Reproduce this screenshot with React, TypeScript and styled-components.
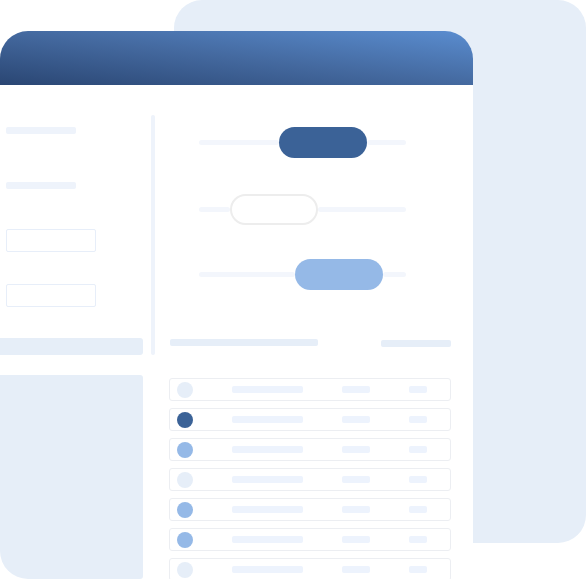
import React from 'react'
import styled, { createGlobalStyle } from 'styled-components'

const GlobalStyle = createGlobalStyle`
    html, body {
        margin: 0;
        padding: 0;
        overflow: hidden;
        background: #ffffff;
        font-family: 'Liberation Sans', Arial, sans-serif;
    }
`

const Stage = styled.div`
    position: relative;
    width: 586px;
    height: 579px;
    overflow: hidden;
    background: #ffffff;
`

// decorative card lying behind the window
const BackCard = styled.div`
    position: absolute;
    left: 174px;
    top: 0;
    width: 412px;
    height: 543px;
    border-radius: 28px;
    background: #e6eef8;
`

const Window = styled.div`
    position: absolute;
    left: 0;
    top: 31px;
    width: 473px;
    height: 560px;
    border-radius: 28px;
    background: #ffffff;
    overflow: hidden;
    display: flex;
    flex-direction: column;
`

const TitleBar = styled.div`
    height: 54px;
    flex-shrink: 0;
    background: linear-gradient(to top right, #2a4673 0%, #44699f 50%, #5a8dd0 100%);
`

const Body = styled.div`
    display: flex;
    padding-top: 42px;
`

const Sidebar = styled.div`
    width: 143px;
    flex-shrink: 0;
    display: flex;
    flex-direction: column;
`

const SideLabel = styled.div<{ $mt?: number }>`
    width: 70px;
    height: 7px;
    margin-left: 6px;
    margin-top: ${p => p.$mt ?? 0}px;
    border-radius: 2px;
    background: #eef3fb;
`

const SideInput = styled.div<{ $mt: number }>`
    width: 88px;
    height: 21px;
    margin-left: 6px;
    margin-top: ${p => p.$mt}px;
    border: 1px solid #e7eef9;
    border-radius: 2px;
`

const SideBar = styled.div`
    height: 17px;
    margin-top: 31px;
    border-radius: 0 3px 3px 0;
    background: #e6eef8;
`

const SideBlock = styled.div`
    height: 204px;
    margin-top: 20px;
    border-radius: 0 3px 3px 28px;
    background: #e6eef8;
`

const Divider = styled.div`
    width: 4px;
    height: 240px;
    margin: -12px 0 0 8px;
    border-radius: 2px;
    background: #eef3fb;
`

const Main = styled.div`
    width: 282px;
    margin-left: 14px;
    display: flex;
    flex-direction: column;
`

const SliderRow = styled.div<{ $mt?: number }>`
    display: flex;
    align-items: center;
    height: 31px;
    margin-left: 30px;
    width: 207px;
    margin-top: ${p => p.$mt ?? 0}px;
`

const Track = styled.div<{ $w?: number }>`
    height: 5px;
    border-radius: 3px;
    background: #f3f6fc;
    ${p => (p.$w !== undefined ? `width: ${p.$w}px; flex-shrink: 0;` : 'flex: 1;')}
`

const Thumb = styled.div<{ $variant: 'dark' | 'light' | 'blank' }>`
    width: 88px;
    height: 31px;
    flex-shrink: 0;
    box-sizing: border-box;
    border-radius: 16px;
    background: ${p =>
        p.$variant === 'dark' ? '#3b6297' : p.$variant === 'light' ? '#95b9e7' : '#ffffff'};
    border: ${p => (p.$variant === 'blank' ? '2px solid #ededed' : 'none')};
`

const TableHead = styled.div`
    display: flex;
    justify-content: space-between;
    align-items: flex-start;
    margin-top: 49px;
    padding: 0 0 0 1px;
`

const HeadBar = styled.div<{ $w: number }>`
    width: ${p => p.$w}px;
    height: 7px;
    margin-top: ${p => (p.$w < 100 ? 1 : 0)}px;
    border-radius: 2px;
    background: #e6eef8;
`

const Rows = styled.div`
    display: flex;
    flex-direction: column;
    gap: 7px;
    margin-top: 31px;
`

const Row = styled.div`
    height: 21px;
    border: 1px solid #eceef2;
    border-radius: 3px;
    display: flex;
    align-items: center;
    padding-left: 7px;
    gap: 39px;
`

const Dot = styled.div<{ $color: string }>`
    width: 16px;
    height: 16px;
    border-radius: 50%;
    flex-shrink: 0;
    background: ${p => p.$color};
`

const Cell = styled.div<{ $w: number }>`
    width: ${p => p.$w}px;
    height: 7px;
    border-radius: 2px;
    background: #edf3fd;
`

const sliders: { offset: number; variant: 'dark' | 'light' | 'blank'; mt: number }[] = [
    { offset: 80, variant: 'dark', mt: 0 },
    { offset: 31, variant: 'blank', mt: 36 },
    { offset: 96, variant: 'light', mt: 34 },
]

const dotColors = ['#e6eef8', '#3b6297', '#95b9e7', '#e6eef8', '#95b9e7', '#95b9e7', '#e6eef8']

const App = () => {
    return (
        <>
            <GlobalStyle />
            <Stage>
                <BackCard />
                <Window>
                    <TitleBar />
                    <Body>
                        <Sidebar>
                            <SideLabel />
                            <SideLabel $mt={48} />
                            <SideInput $mt={40} />
                            <SideInput $mt={32} />
                            <SideBar />
                            <SideBlock />
                        </Sidebar>
                        <Divider />
                        <Main>
                            {sliders.map((s, i) => (
                                <SliderRow key={i} $mt={s.mt}>
                                    <Track $w={s.offset} />
                                    <Thumb $variant={s.variant} />
                                    <Track />
                                </SliderRow>
                            ))}
                            <TableHead>
                                <HeadBar $w={148} />
                                <HeadBar $w={70} />
                            </TableHead>
                            <Rows>
                                {dotColors.map((c, i) => (
                                    <Row key={i}>
                                        <Dot $color={c} />
                                        <Cell $w={71} />
                                        <Cell $w={28} />
                                        <Cell $w={18} />
                                    </Row>
                                ))}
                            </Rows>
                        </Main>
                    </Body>
                </Window>
            </Stage>
        </>
    )
}

export default App
